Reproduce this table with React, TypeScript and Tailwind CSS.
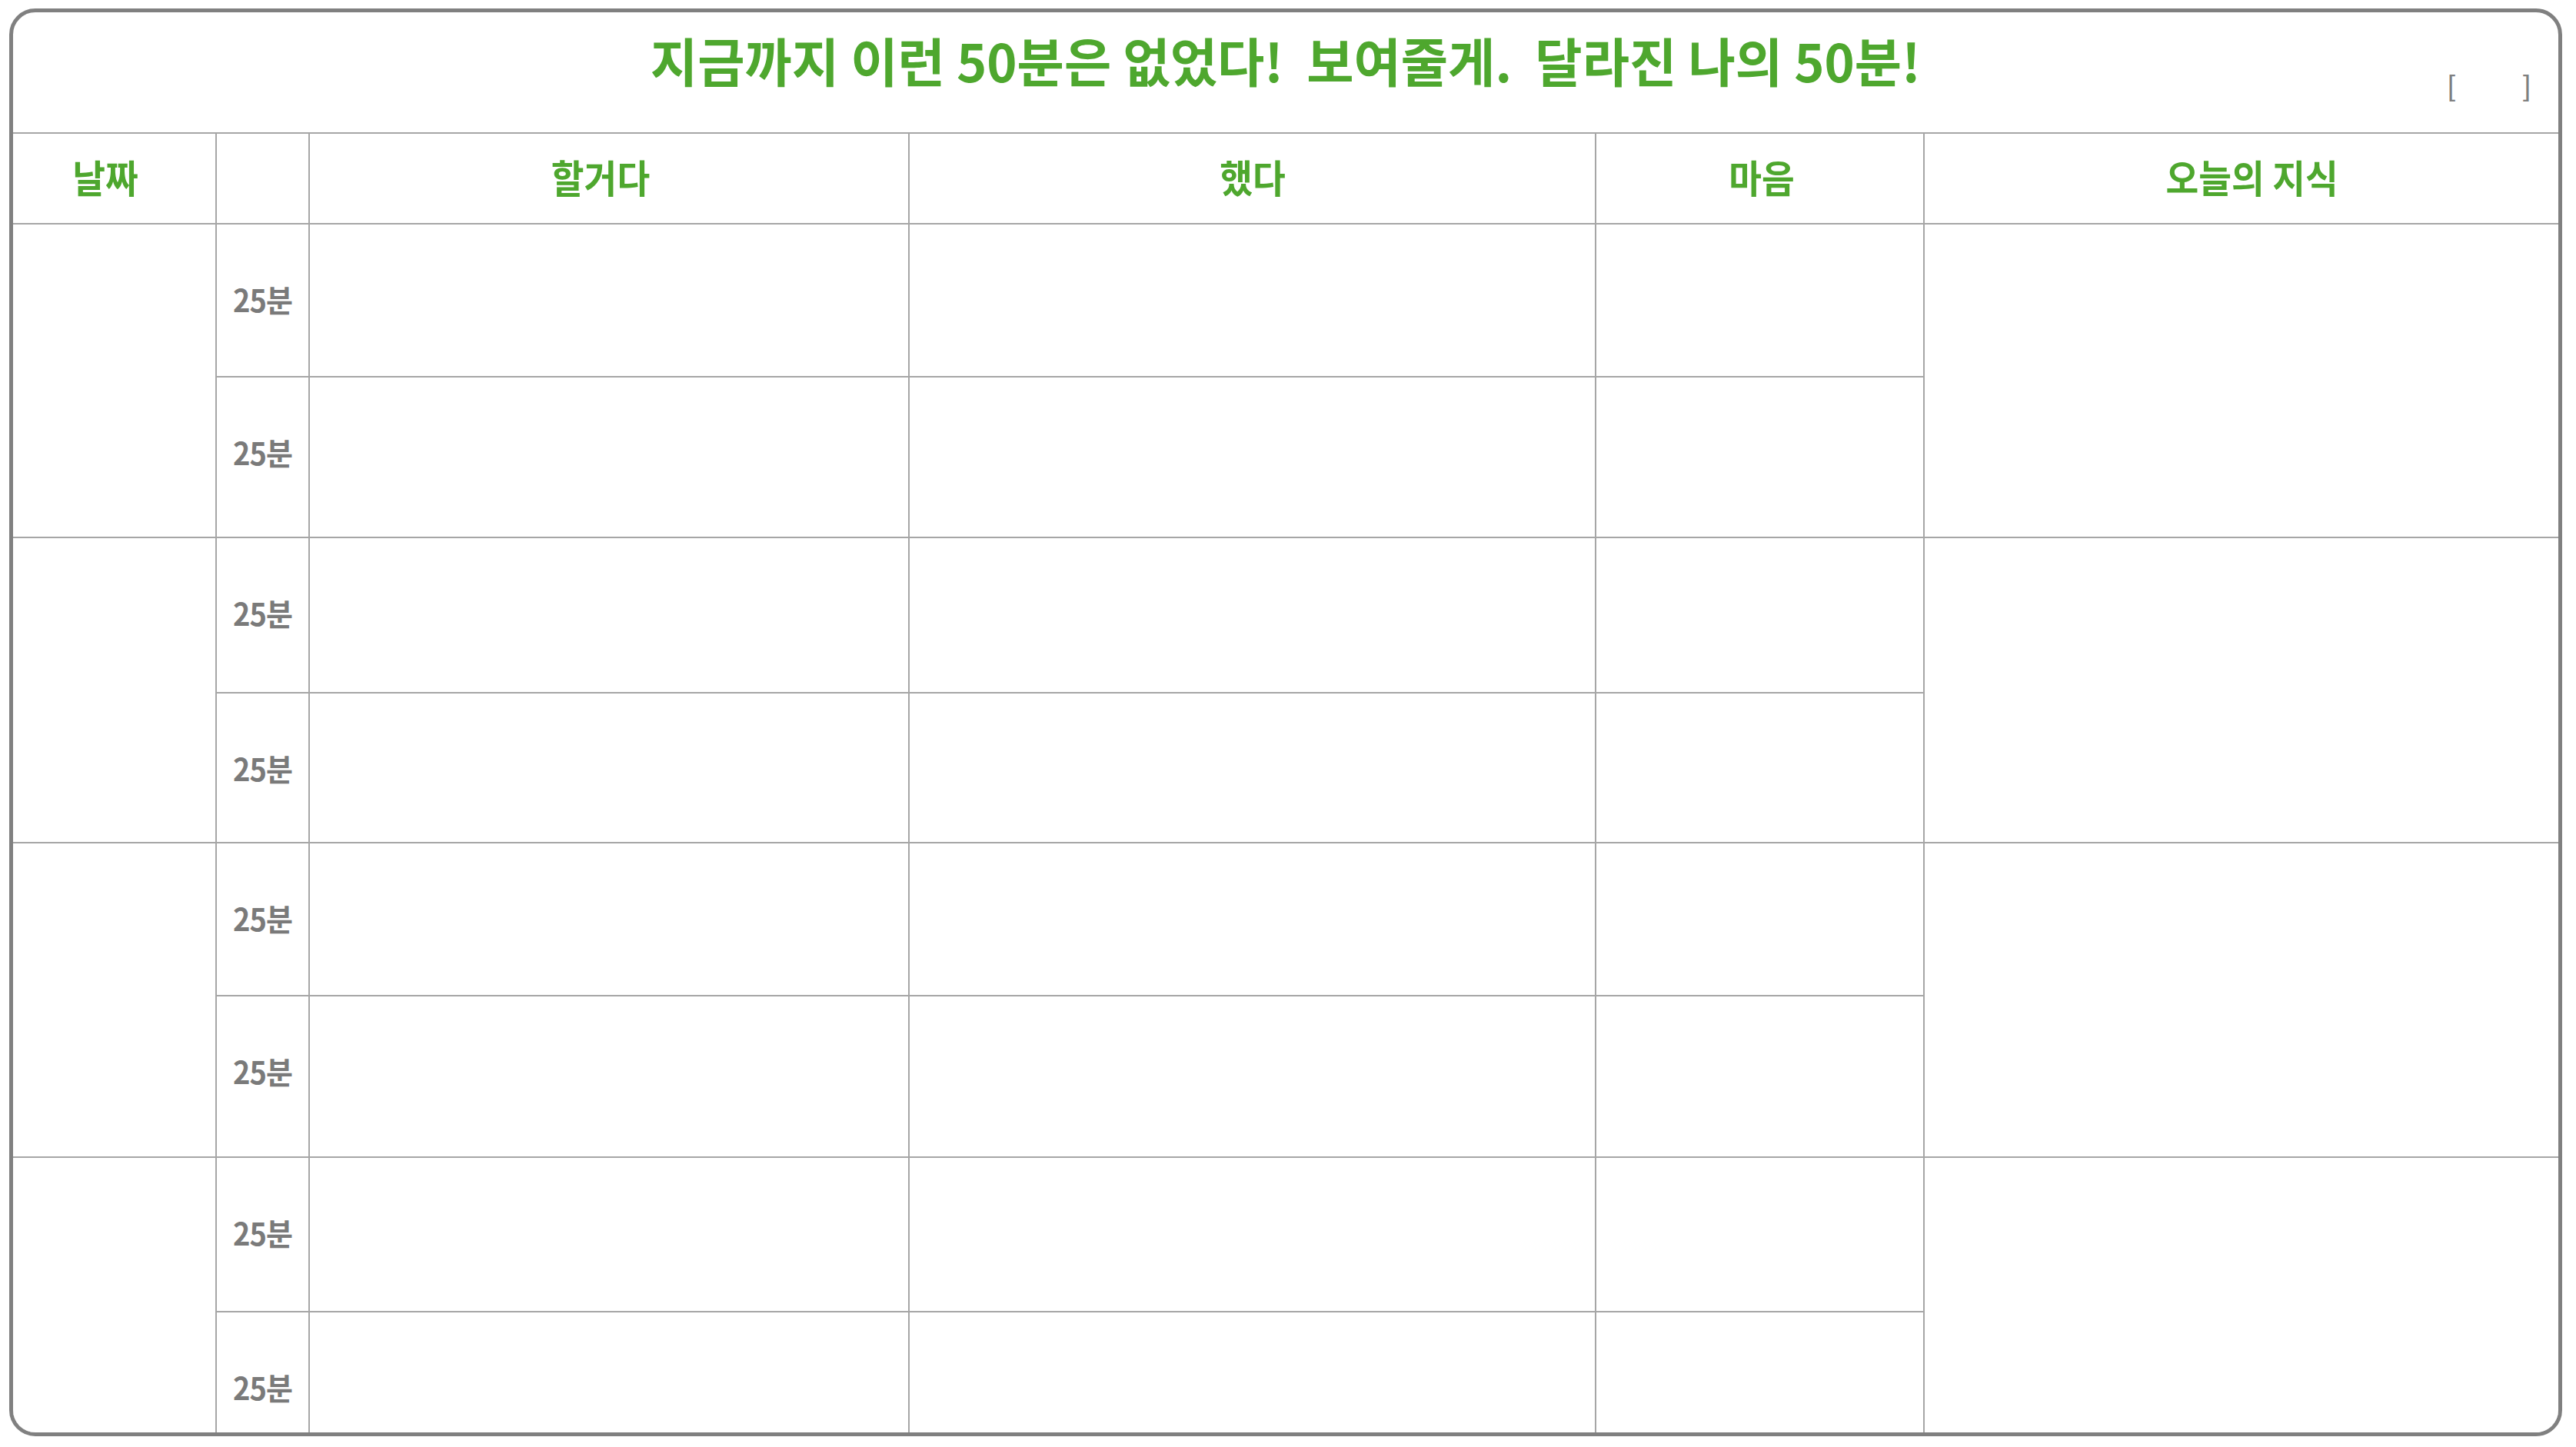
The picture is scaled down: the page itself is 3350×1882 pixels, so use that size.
import React from "react";

const F = { fontFamily: '"Noto Sans CJK KR", "Noto Sans", sans-serif' };

function Head({ children, pad = "" }: { children?: React.ReactNode; pad?: string }) {
  return (
    <div className={"bg-white flex items-center justify-center " + pad}>
      {children ? (
        <span className="inline-block text-[50px] font-bold leading-none text-[#4ea72e] scale-x-[0.93] -translate-y-[3px]">
          {children}
        </span>
      ) : null}
    </div>
  );
}

function Min() {
  return (
    <div className="bg-white flex items-start justify-center pt-[77px]">
      <span className="inline-block text-[40px] font-bold leading-none text-[#7a7a7a] tracking-[-1px] scale-x-[0.95]">
        25분
      </span>
    </div>
  );
}

function Blank({ span }: { span?: boolean }) {
  return <div className={span ? "bg-white row-span-2" : "bg-white"} />;
}

export default function App() {
  const groups = [0, 1, 2, 3];
  return (
    <div className="w-[3350px] h-[1882px] bg-white pl-[12px] pt-[11px]" style={F}>
      <div className="w-[3320px] h-[1857px] border-[5px] border-[#808080] rounded-[34px] overflow-hidden bg-white flex flex-col">
        <div className="h-[156px] grid grid-cols-[1fr_auto_1fr] items-start">
          <div />
          <div className="pt-[28px]">
            <span className="inline-block whitespace-pre text-[68px] font-bold leading-none text-[#4ea72e] scale-x-[0.98]">
              {"지금까지 이런 50분은 없었다!  보여줄게.  달라진 나의 50분!"}
            </span>
          </div>
          <div className="flex justify-end pr-[36px] pt-[78px]">
            <span className="text-[36px] leading-none text-[#808080] flex" style={{ fontFamily: '"Liberation Sans", sans-serif' }}>
              <span>[</span>
              <span className="w-[88px]" />
              <span>]</span>
            </span>
          </div>
        </div>
        <div className="h-[2px] bg-[#a6a6a6]" />
        <div className="flex-1 grid gap-[2px] bg-[#a6a6a6] grid-cols-[263px_119px_778px_891px_425px_1fr] grid-rows-[116px_197px_207px_200px_193px_197px_208px_199px_1fr]">
          <Head pad="pr-[24px]">날짜</Head>
          <Head />
          <Head pad="pr-[22px]">할거다</Head>
          <Head>했다</Head>
          <Head pad="pl-[4px]">마음</Head>
          <Head pad="pl-[28px]">오늘의 지식</Head>
          {groups.map((g) => (
            <React.Fragment key={g}>
              <Blank span />
              <Min />
              <Blank />
              <Blank />
              <Blank />
              <Blank span />
              <Min />
              <Blank />
              <Blank />
              <Blank />
            </React.Fragment>
          ))}
        </div>
      </div>
    </div>
  );
}
